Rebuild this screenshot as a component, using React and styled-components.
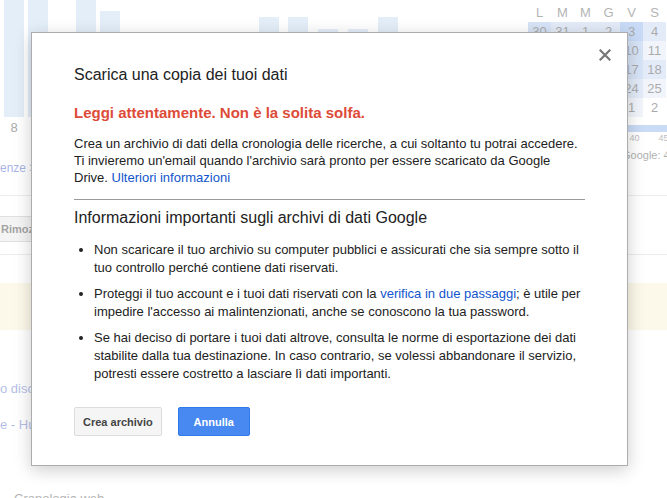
import React from 'react'
import styled, { createGlobalStyle } from 'styled-components'

const GlobalStyle = createGlobalStyle`
  html, body {
    margin: 0;
    padding: 0;
    background: #fff;
  }
  body {
    font-family: "Liberation Sans", Arial, sans-serif;
  }
`

const Screen = styled.div`
  position: relative;
  width: 667px;
  height: 498px;
  overflow: hidden;
  background: #fff;
`

/* ---------- page behind the dialog ---------- */

const Page = styled.div`
  display: flex;
  flex-direction: column;
  font-size: 13px;
  color: #555;
`

const Top = styled.div`
  display: grid;
  grid-template-columns: 528px 139px;
  height: 195px;
  border-bottom: 1px solid #d9d9d9;
`

const Main = styled.div`
  display: flex;
  flex-direction: column;
`

const LinkRow = styled.div`
  margin-top: 23px;
  height: 20px;
  line-height: 20px;
  font-size: 12px;
  color: #4d67c7;
  white-space: nowrap;
`

const Sidebar = styled.div`
  display: flex;
  flex-direction: column;
  padding-top: 3px;
  overflow: hidden;
`

const Calendar = styled.div`
  display: grid;
  grid-template-columns: repeat(6, 23px);
  grid-auto-rows: 19px;
`

const DayHead = styled.div`
  text-align: center;
  line-height: 19px;
  color: #676767;
`

const Day = styled.div`
  text-align: center;
  line-height: 19px;
  color: #555;
  background: ${p => ['transparent', '#e3e9f5', '#c7d7f1', '#afc7ed', '#91b5eb'][p.$level]};
`

const UsageBar = styled.div`
  margin-top: 8px;
  height: 7px;
  background: #93b7eb;
`

const Ticks = styled.div`
  display: flex;
  padding-left: 5px;
  font-size: 9px;
  line-height: 12px;
  color: #777;
`

const Tick = styled.span`
  flex: 0 0 29px;
  text-align: center;
`

const Stat = styled.div`
  margin-top: 3px;
  padding-left: 94px;
  line-height: 16px;
  font-size: 11px;
  color: #606060;
  white-space: nowrap;
`

const Toolbar = styled.div`
  display: flex;
  align-items: flex-start;
  height: 59px;
  padding-top: 20px;
  box-sizing: border-box;
  border-bottom: 1px solid #d9d9d9;
`

const ToolButton = styled.div`
  height: 24px;
  line-height: 24px;
  padding: 0 8px 0 1px;
  font-size: 11px;
  font-weight: bold;
  color: #444;
  background: #e9e9e9;
  border: 1px solid #c1c1c1;
  border-left: none;
`

const Notice = styled.div`
  margin-top: 28px;
  height: 47px;
  background: #f9f3d5;
`

const List = styled.div`
  margin-top: 41px;
  display: flex;
  flex-direction: column;
`

const ListRow = styled.div`
  height: 36px;
  line-height: 36px;
  color: #697bcb;
  white-space: nowrap;
`

const Footer = styled.div`
  margin-top: 46px;
  padding-left: 14px;
  line-height: 20px;
  color: #666;
  white-space: nowrap;
`

const Backdrop = styled.div`
  position: absolute;
  inset: 0;
  background: rgba(255, 255, 255, 0.5);
`

/* ---------- dialog ---------- */

const Dialog = styled.div`
  position: absolute;
  left: 31px;
  top: 32px;
  width: 597px;
  height: 434px;
  box-sizing: border-box;
  padding: 32px 42px 0;
  background: #fff;
  border: 1px solid #acacac;
  box-shadow: 0 4px 16px rgba(0, 0, 0, 0.2);
  color: #222;
  font-size: 13px;
  display: flex;
  flex-direction: column;
`

const Close = styled.button`
  position: absolute;
  top: 16px;
  right: 16px;
  width: 12px;
  height: 12px;
  padding: 0;
  border: 0;
  background: none;
  color: #777;
  cursor: pointer;
  display: flex;
`

const Title = styled.h2`
  margin: 0;
  font-size: 16px;
  font-weight: normal;
  line-height: 20px;
  color: #222;
`

const Warning = styled.div`
  margin-top: 18px;
  font-size: 15px;
  font-weight: bold;
  line-height: 20px;
  color: #dd4b39;
`

const Text = styled.p`
  margin: 12px 0 0;
  line-height: 17px;
`

const Link = styled.a`
  color: #1155cc;
  text-decoration: none;
`

const Rule = styled.hr`
  margin: 13px 0 0;
  border: 0;
  border-top: 1px solid #9a9a9a;
`

const Subtitle = styled.h3`
  margin: 8px 0 0;
  font-size: 16px;
  font-weight: normal;
  line-height: 20px;
  color: #222;
`

const Bullets = styled.ul`
  margin: 13px 0 0;
  padding-left: 20px;
  list-style: disc;
`

const Bullet = styled.li`
  line-height: 18px;
  margin-bottom: 8px;
  &:last-child {
    margin-bottom: 0;
  }
`

const Actions = styled.div`
  margin-top: 24px;
  display: flex;
  gap: 16px;
`

const Button = styled.button`
  box-sizing: border-box;
  min-width: 72px;
  height: 29px;
  padding: 0 8px;
  border-radius: 2px;
  font-family: inherit;
  font-size: 11px;
  font-weight: bold;
  cursor: pointer;
  border: 1px solid ${p => (p.$primary ? '#3079ed' : '#dcdcdc')};
  background: ${p => (p.$primary ? '#4889f1' : '#f5f5f5')};
  color: ${p => (p.$primary ? '#fff' : '#444')};
`

const bars = [
  [4, 0], [28, 0], [76, 0], [100, 11], [172, 32],
  [259, 17], [288, 17], [318, 29], [348, 29], [378, 17],
]

const weeks = [
  [[30, 3], [31, 2], [1, 2], [2, 2], [3, 4], [4, 2]],
  [[6, 2], [7, 2], [8, 3], [9, 2], [10, 3], [11, 1]],
  [[13, 3], [14, 2], [15, 2], [16, 3], [17, 3], [18, 2]],
  [[20, 2], [21, 3], [22, 2], [23, 2], [24, 2], [25, 1]],
  [[27, 2], [28, 2], [29, 2], [30, 2], [1, 1], [2, 0]],
]

const Chart = () => (
  <svg width="528" height="135" viewBox="0 0 528 135">
    {bars.map(([x, y]) => (
      <rect key={x} x={x} y={y} width="20" height={117 - y} fill="#c9ddf3" />
    ))}
    <text x="14" y="132" fontSize="13" fill="#515151" textAnchor="middle"
      fontFamily="Liberation Sans, Arial, sans-serif">8</text>
  </svg>
)

const CloseIcon = () => (
  <svg width="12" height="12" viewBox="0 0 12 12">
    <path d="M1.5 1.5 L10.5 10.5 M10.5 1.5 L1.5 10.5" stroke="currentColor"
      strokeWidth="2.2" strokeLinecap="square" />
  </svg>
)

export default function App() {
  return (
    <Screen>
      <GlobalStyle />
      <Page>
        <Top>
          <Main>
            <Chart />
            <LinkRow>enze &gt;</LinkRow>
          </Main>
          <Sidebar>
            <Calendar>
              {['L', 'M', 'M', 'G', 'V', 'S'].map((d, i) => (
                <DayHead key={i}>{d}</DayHead>
              ))}
              {weeks.flat().map(([n, lvl], i) => (
                <Day key={i} $level={lvl}>{n}</Day>
              ))}
            </Calendar>
            <UsageBar />
            <Ticks>
              {['10', '20', '30', '40', '45'].map(t => <Tick key={t}>{t}</Tick>)}
            </Ticks>
            <Stat>Google: 4</Stat>
          </Sidebar>
        </Top>
        <Toolbar>
          <ToolButton>Rimoz</ToolButton>
        </Toolbar>
        <Notice />
        <List>
          <ListRow>o disco</ListRow>
          <ListRow>e - Hu</ListRow>
        </List>
        <Footer>Cronologia web</Footer>
      </Page>
      <Backdrop />
      <Dialog role="dialog">
        <Close aria-label="Chiudi"><CloseIcon /></Close>
        <Title>Scarica una copia dei tuoi dati</Title>
        <Warning>Leggi attentamente. Non è la solita solfa.</Warning>
        <Text>
          Crea un archivio di dati della cronologia delle ricerche, a cui soltanto tu potrai accedere.
          Ti invieremo un'email quando l'archivio sarà pronto per essere scaricato da Google
          Drive. <Link href="#">Ulteriori informazioni</Link>
        </Text>
        <Rule />
        <Subtitle>Informazioni importanti sugli archivi di dati Google</Subtitle>
        <Bullets>
          <Bullet>
            Non scaricare il tuo archivio su computer pubblici e assicurati che sia sempre sotto il
            tuo controllo perché contiene dati riservati.
          </Bullet>
          <Bullet>
            Proteggi il tuo account e i tuoi dati riservati con la{' '}
            <Link href="#">verifica in due passaggi</Link>; è utile per impedire l'accesso ai
            malintenzionati, anche se conoscono la tua password.
          </Bullet>
          <Bullet>
            Se hai deciso di portare i tuoi dati altrove, consulta le norme di esportazione dei dati
            stabilite dalla tua destinazione. In caso contrario, se volessi abbandonare il servizio,
            potresti essere costretto a lasciare lì dati importanti.
          </Bullet>
        </Bullets>
        <Actions>
          <Button>Crea archivio</Button>
          <Button $primary>Annulla</Button>
        </Actions>
      </Dialog>
    </Screen>
  )
}
